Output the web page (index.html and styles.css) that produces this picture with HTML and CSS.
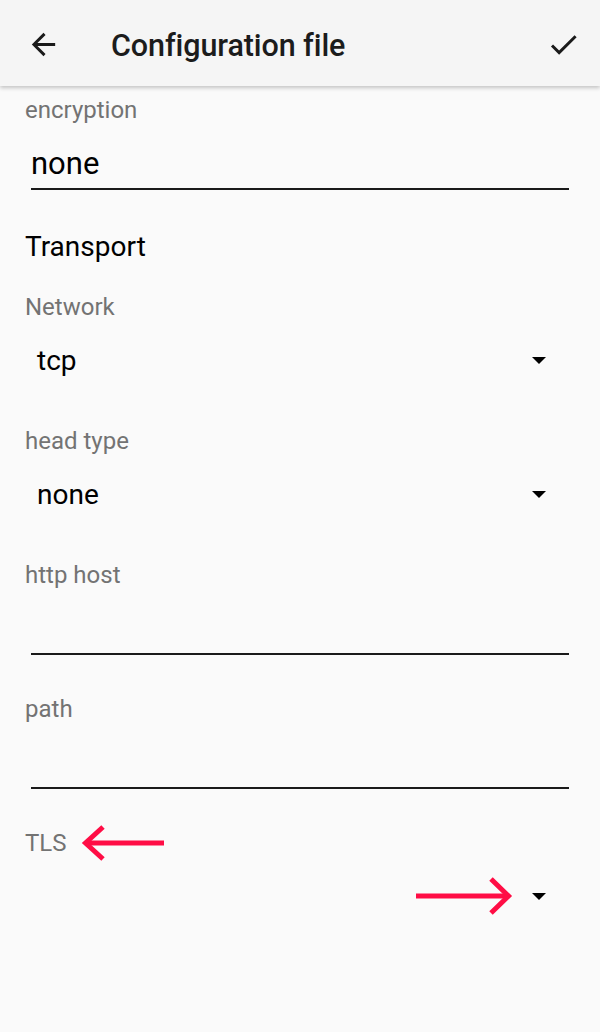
FILE: index.html
```html
<!DOCTYPE html>
<html>
<head>
<meta charset="utf-8">
<link rel="stylesheet" href="styles.css">
</head>
<body>
<header class="appbar">
  <svg class="icon back" viewBox="0 0 24 24"><path d="M20 11H7.83l5.59-5.59L12 4l-8 8 8 8 1.41-1.41L7.83 13H20v-2z" fill="#1a1a1a"/></svg>
  <h1 class="title">Configuration file</h1>
  <svg class="icon check" viewBox="0 0 24 24"><path d="M9 16.17L4.83 12l-1.42 1.41L9 19 21 7l-1.41-1.41z" fill="#1a1a1a"/></svg>
</header>
<main class="form">
  <div class="label first">encryption</div>
  <div class="edit"><span class="edit-value">none</span></div>

  <div class="section">Transport</div>

  <div class="label after-section">Network</div>
  <div class="spinner"><span class="spin-value">tcp</span><span class="caret"></span></div>

  <div class="label after-spinner">head type</div>
  <div class="spinner"><span class="spin-value">none</span><span class="caret"></span></div>

  <div class="label after-spinner">http host</div>
  <div class="edit"><span class="edit-value"></span></div>

  <div class="label after-edit">path</div>
  <div class="edit"><span class="edit-value"></span></div>

  <div class="label after-edit tls">TLS
    <svg class="mark mark-left" width="84" height="38" viewBox="0 0 84 38"><path d="M83 19H6" stroke="#ff0d45" stroke-width="5" fill="none"/><path d="M22 3L4.5 19L22 35" stroke="#ff0d45" stroke-width="5" fill="none"/></svg>
  </div>
  <div class="spinner">
    <span class="spin-value"></span>
    <svg class="mark mark-right" width="100" height="38" viewBox="0 0 100 38"><path d="M2 19H92" stroke="#ff0d45" stroke-width="5" fill="none"/><path d="M77 2L94.5 19L77 36" stroke="#ff0d45" stroke-width="5" fill="none"/></svg>
    <span class="caret"></span>
  </div>
</main>
</body>
</html>
```
FILE: styles.css
```css
html, body {
  margin: 0;
  padding: 0;
}
body {
  width: 600px;
  height: 1032px;
  background: #fafafa;
  font-family: Roboto, "Noto Sans", "Liberation Sans", sans-serif;
  overflow: hidden;
}
.appbar {
  height: 86px;
  background: #f5f5f5;
  display: flex;
  align-items: center;
  box-shadow: 0 2px 4px rgba(0, 0, 0, 0.22);
  position: relative;
  z-index: 1;
}
.icon {
  width: 35px;
  height: 35px;
  flex: none;
}
.back {
  margin-left: 26px;
  margin-top: 2px;
}
.title {
  margin: 6px 0 0 50px;
  font-size: 30.5px;
  font-weight: 500;
  color: #1c1c1c;
  flex: 1;
  line-height: 36px;
  letter-spacing: -0.1px;
}
.check {
  margin-right: 19px;
  margin-top: 2px;
}
.form {
  padding: 0 31px 0 25px;
}
.label {
  font-size: 24px;
  line-height: 28px;
  color: #737373;
  height: 28px;
}
.label.first { margin-top: 10px; }
.label.after-section { margin-top: 30px; }
.label.after-spinner { margin-top: 50px; }
.label.after-edit { margin-top: 40px; }
.edit {
  margin: 22px 0 0 6px;
  padding-bottom: 6px;
  border-bottom: 2px solid #1a1a1a;
  height: 36px;
}
.edit-value {
  font-size: 31px;
  line-height: 36px;
  color: #000;
}
.section {
  margin-top: 41px;
  font-size: 28px;
  line-height: 32px;
  color: #000;
}
.spinner {
  margin-top: 24px;
  height: 32px;
  display: flex;
  align-items: center;
  padding-left: 12px;
  padding-right: 23px;
}
.spin-value {
  font-size: 28px;
  line-height: 32px;
  color: #000;
  flex: 1;
}
.caret {
  width: 0;
  height: 0;
  border-left: 7.5px solid transparent;
  border-right: 7.5px solid transparent;
  border-top: 7px solid #000;
  flex: none;
  margin-top: -2px;
}
.tls {
  display: flex;
  align-items: center;
}
.mark {
  flex: none;
}
.mark-left {
  margin-left: 14px;
  margin-top: -1px;
}
.mark-right {
  margin-right: 18px;
  margin-top: -2px;
}
```
